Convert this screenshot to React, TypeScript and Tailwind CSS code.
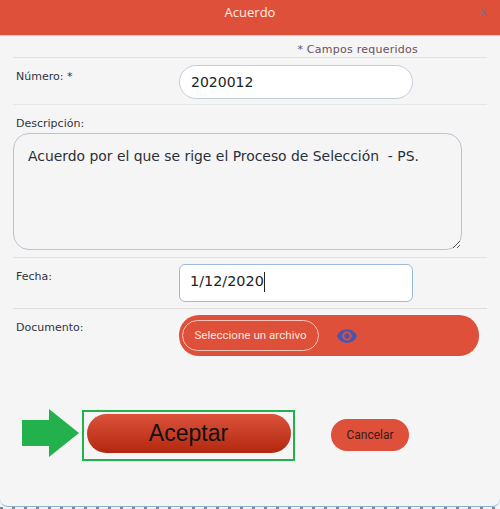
const verdana = '[font-family:"DejaVu_Sans",sans-serif]';

function Main() {
	return (
		<div className="flex flex-col w-[500px] h-[509px] bg-[#f2f4f7] overflow-hidden">
			<div className="flex flex-col shrink-0 h-[507px] bg-[#f5f5f5] rounded-b-lg border-b border-[#8fb0d0] overflow-hidden">
				<div className="relative flex items-center justify-center shrink-0 h-[36px] bg-[#de5039] border-b border-[#c9cfe0] pb-[10px]">
					<span className="text-[13px] text-[#fdeeea] font-['Open_Sans',sans-serif]">Acuerdo</span>
					<span className="absolute right-[13px] top-[2px] text-[13px] font-bold text-[#8f6a78] font-['Liberation_Sans',sans-serif]">x</span>
				</div>

				<div className="flex flex-col mx-[13px]">
					<div className="flex justify-end h-[22px] pr-[69px] pt-[7px] border-b border-[#e1e1e1]">
						<span className={`text-[11px] leading-[13px] tracking-[0.25px] text-[#6b5058] ${verdana}`}>* Campos requeridos</span>
					</div>

					<div className="flex h-[47px] pt-[7px] border-b border-[#e6e6e6]">
						<label className={`w-[166px] pl-[3px] pt-[5px] text-[11px] leading-[14px] text-[#333340] ${verdana}`}>Número: *</label>
						<input
							readOnly
							value="2020012"
							className={`w-[234px] h-[34px] px-[11px] rounded-[17px] bg-white border border-[#c6cddb] text-[14px] text-[#222] outline-none ${verdana}`}
						/>
					</div>

					<div className="flex flex-col h-[153px] pt-[12px] border-b border-[#e1e1e1]">
						<label className={`pl-[3px] text-[11px] leading-[14px] text-[#333340] ${verdana}`}>Descripción:</label>
						<textarea
							readOnly
							value="Acuerdo por el que se rige el Proceso de Selección  - PS."
							className={`mt-[2px] w-[449px] h-[117px] px-[14px] py-[13px] rounded-[16px] bg-[#f5f5f5] border border-[#bcc3d2] text-[13.9px] leading-[18px] text-[#2b2f3a] outline-none ${verdana}`}
						/>
					</div>

					<div className="flex h-[51px] pt-[6px] border-b border-[#dcdcdc]">
						<label className={`w-[166px] pl-[3px] pt-[6px] text-[11px] leading-[14px] text-[#333340] ${verdana}`}>Fecha:</label>
						<div className={`flex items-center w-[234px] h-[38px] px-[10px] pb-[3px] rounded-[6px] bg-white border border-[#9dbbdc] text-[14.4px] text-[#222] ${verdana}`}>
							1/12/2020
							<span className="w-px h-[20px] bg-[#222]" />
						</div>
					</div>

					<div className="flex pt-[6px]">
						<label className={`w-[166px] pl-[3px] pt-[6px] text-[11px] leading-[14px] text-[#333340] ${verdana}`}>Documento:</label>
						<div className="flex items-center w-[300px] h-[41px] pl-[3px] rounded-[20px] bg-[#de5039]">
							<button className="w-[137px] h-[31px] rounded-[16px] border border-[#f3c3b8] text-[11.6px] text-[#fde4de] font-['Roboto',sans-serif]">
								Seleccione un archivo
							</button>
							<svg width="22" height="22" viewBox="0 0 24 24" className="ml-[17px] shrink-0" fill="#4a55b0">
								<path d="M12 4.5C7 4.5 2.73 7.61 1 12c1.73 4.39 6 7.5 11 7.5s9.27-3.11 11-7.5c-1.73-4.39-6-7.5-11-7.5zM12 17c-2.76 0-5-2.24-5-5s2.24-5 5-5 5 2.24 5 5-2.24 5-5 5zm0-8c-1.66 0-3 1.34-3 3s1.34 3 3 3 3-1.34 3-3-1.34-3-3-3z" />
							</svg>
						</div>
					</div>
				</div>

				<div className="flex items-start mt-[54px] pl-[22px]">
					<svg width="57" height="48" viewBox="0 0 57 48" className="shrink-0 mt-[-1px]">
						<path d="M0 11H27V0L57 24L27 48V37H0Z" fill="#22b14c" />
					</svg>
					<div className="flex items-start justify-center ml-[3px] w-[213px] h-[51px] border-[2px] border-[#22b14c] pt-[2px]">
						<button className="w-[204px] h-[39px] rounded-[20px] bg-gradient-to-b from-[#dc5139] to-[#b3260c] text-[23px] text-[#111] font-['Liberation_Sans',sans-serif]">
							Aceptar
						</button>
					</div>
					<button className="ml-[36px] mt-[9px] w-[78px] h-[32px] rounded-[16px] bg-[#de5039] text-[12px] text-[#3a1a18] font-['Roboto',sans-serif]">
						Cancelar
					</button>
				</div>
			</div>
			<div className="h-[2px] bg-[repeating-linear-gradient(90deg,#80858c_0_3px,#f2f4f7_3px_12px)]" />
		</div>
	);
}

export default Main;
